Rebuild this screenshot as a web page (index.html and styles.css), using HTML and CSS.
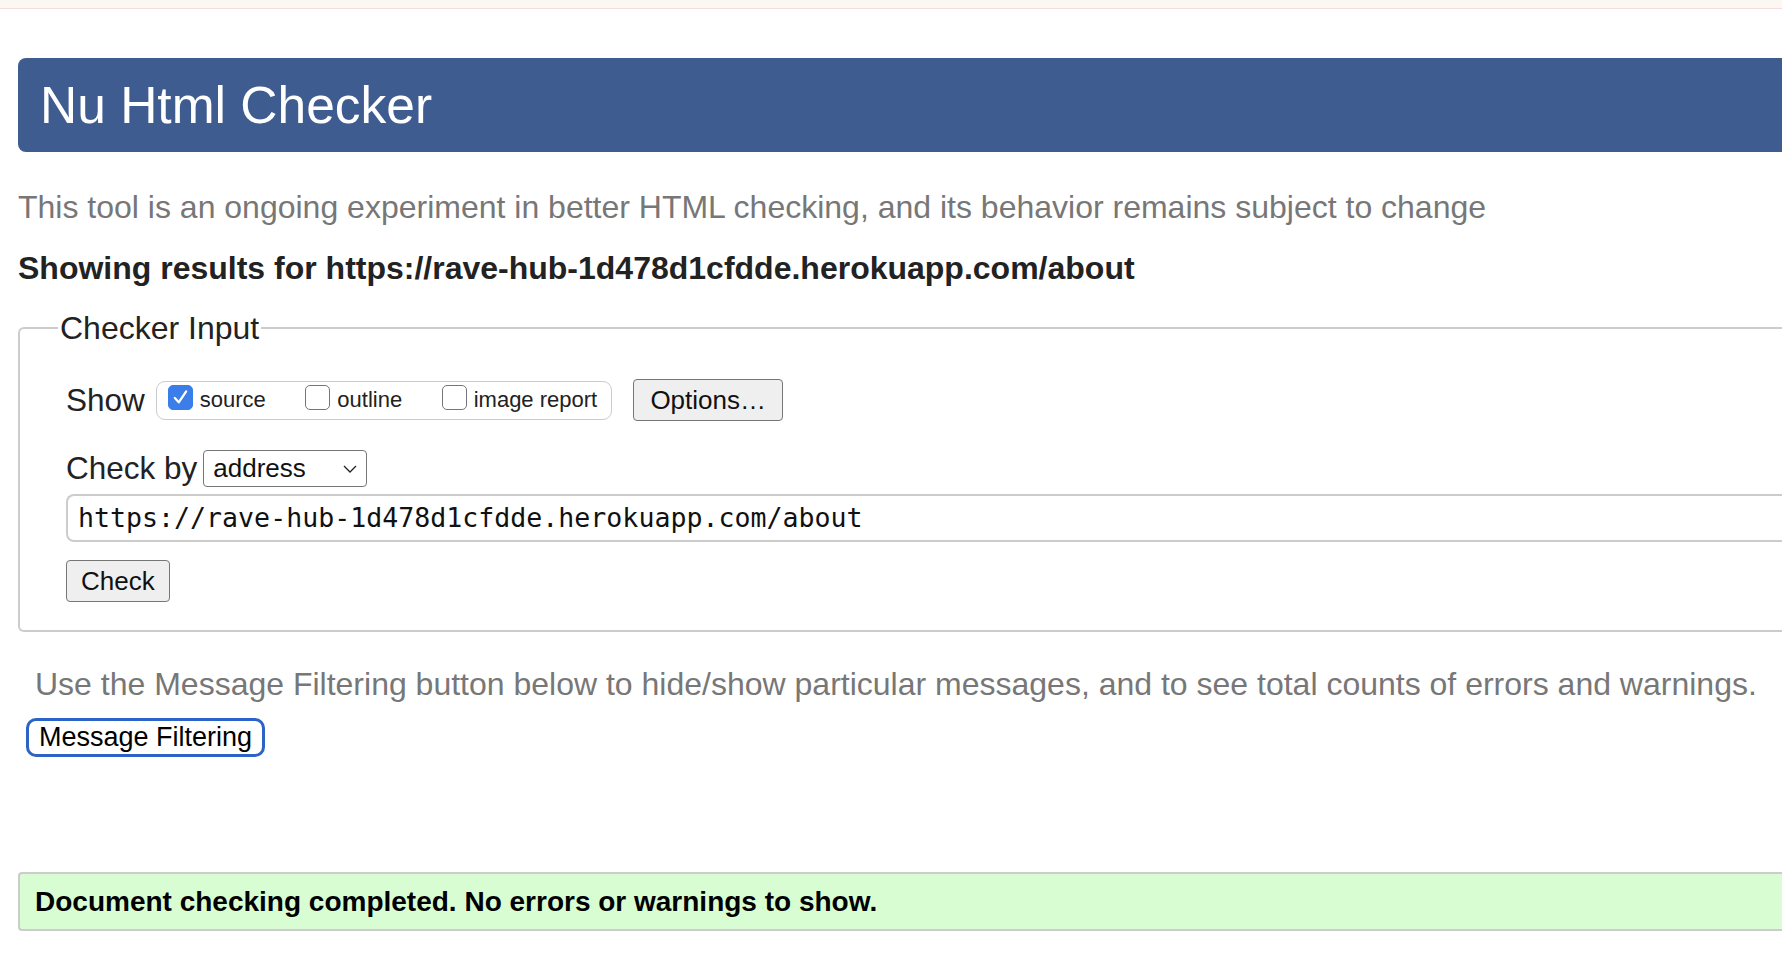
FILE: index.html
```html
<!DOCTYPE html>
<html lang="en">
<head>
<meta charset="utf-8">
<title>Nu Html Checker</title>
<link rel="stylesheet" href="styles.css">
</head>
<body>
<div class="topbar"></div>
<div class="page">
  <h1 class="title">Nu Html Checker</h1>
  <p class="lede">This tool is an ongoing experiment in better HTML checking, and its behavior remains subject to change</p>
  <h2 class="results">Showing results for https://rave-hub-1d478d1cfdde.herokuapp.com/about</h2>
  <fieldset class="checker">
    <legend class="legend">Checker Input</legend>
    <div class="row show-row">
      <span class="label">Show</span>
      <div class="show-group">
        <label class="opt"><span class="box checked"><svg viewBox="0 0 24 24" width="24" height="24"><path d="M5.5 12.5 L10 17.5 L18.5 5" fill="none" stroke="#fff" stroke-width="2.6" stroke-linecap="round" stroke-linejoin="round"/></svg></span><span class="opt-text">source</span></label>
        <label class="opt"><span class="box"></span><span class="opt-text">outline</span></label>
        <label class="opt"><span class="box"></span><span class="opt-text">image report</span></label>
      </div>
      <button class="btn options">Options…</button>
    </div>
    <div class="row checkby-row">
      <span class="label">Check by</span>
      <div class="select"><span>address</span><svg viewBox="0 0 14 8" width="14" height="8"><path d="M1 1 L7 7 L13 1" fill="none" stroke="#222" stroke-width="1.3"/></svg></div>
    </div>
    <div class="url">https://rave-hub-1d478d1cfdde.herokuapp.com/about</div>
    <button class="btn check">Check</button>
  </fieldset>
  <p class="filter-note">Use the Message Filtering button below to hide/show particular messages, and to see total counts of errors and warnings.</p>
  <button class="filter-btn">Message Filtering</button>
  <div class="success">Document checking completed. No errors or warnings to show.</div>
</div>
</body>
</html>
```

FILE: styles.css
```css
html, body {
  margin: 0;
  padding: 0;
  overflow: hidden;
  background: #fff;
}
body {
  font-family: "Liberation Sans", Arial, Helvetica, sans-serif;
  color: #222;
}
.topbar {
  height: 8px;
  background: #fdf7f4;
  border-bottom: 1px solid #f2dfdd;
}
.page {
  width: calc(100% + 60px);
  padding-left: 18px;
  box-sizing: border-box;
}
.title {
  margin: 49px 0 0;
  height: 94px;
  box-sizing: border-box;
  background: #3e5c8f;
  color: #fff;
  border-radius: 8px 0 0 8px;
  font-weight: normal;
  font-size: 51.5px;
  line-height: 94px;
  padding-left: 22px;
}
.lede {
  margin: 35px 0 0 0;
  font-size: 32px;
  line-height: 40px;
  color: #777;
}
.results {
  margin: 22px 0 0 0;
  font-size: 32px;
  line-height: 38px;
  font-weight: bold;
  color: #222;
}
.checker {
  margin: 23px 0 0;
  padding: 0 0 28px 46px;
  border: 2px solid #ccc;
  border-right: none;
  border-radius: 6px 0 0 6px;
}
.legend {
  margin-left: -8px;
  padding: 0 2px;
  font-size: 32px;
  line-height: 36px;
  color: #222;
}
.row {
  display: flex;
  align-items: center;
}
.show-row {
  margin-top: 30px;
  height: 48px;
}
.label {
  font-size: 31.5px;
  color: #222;
}
.show-group {
  display: flex;
  align-items: center;
  margin-left: 11px;
  height: 37px;
  padding: 0 14px 0 11px;
  border: 1.5px solid #ccc;
  border-radius: 9px;
  gap: 14px;
}
.opt {
  display: flex;
  align-items: center;
  font-size: 22px;
  color: #222;
  padding-right: 25.5px;
}
.opt:last-child {
  padding-right: 0;
}
.box {
  width: 25px;
  height: 25px;
  box-sizing: border-box;
  border: 1.5px solid #767676;
  border-radius: 5px;
  background: #fff;
  margin-right: 7px;
  margin-bottom: 6px;
  display: flex;
  align-items: center;
  justify-content: center;
}
.box.checked {
  background: #3b7de9;
  border-color: #3b7de9;
}
.box svg {
  width: 21px;
  height: 21px;
}
.opt-text {
  line-height: 26px;
}
.btn {
  font-family: "Liberation Sans", Arial, Helvetica, sans-serif;
  background: #efefef;
  color: #111;
  border: 1.5px solid #767676;
  border-radius: 4px;
  padding: 0 14px;
}
.options {
  margin-left: 21px;
  width: 150px;
  height: 42px;
  font-size: 26px;
}
.checkby-row {
  margin-top: 26px;
}
.label, .select {
  line-height: 37px;
}
.select {
  margin-left: 6px;
  width: 164px;
  height: 37px;
  box-sizing: border-box;
  border: 1.5px solid #767676;
  border-radius: 4px;
  display: flex;
  align-items: center;
  justify-content: space-between;
  padding: 0 9px 0 9px;
  font-size: 26px;
  color: #111;
}
.url {
  margin-top: 7px;
  height: 48px;
  box-sizing: border-box;
  border: 2px solid #ccc;
  border-right: none;
  border-radius: 8px 0 0 8px;
  padding-left: 10px;
  font-family: "DejaVu Sans Mono", "Liberation Mono", monospace;
  font-size: 26.6px;
  line-height: 44px;
  color: #111;
}
.check {
  display: block;
  margin-top: 18px;
  height: 42px;
  font-size: 26px;
}
.filter-note {
  margin: 32px 0 0 17px;
  font-size: 32px;
  line-height: 40px;
  color: #777;
}
.filter-btn {
  display: block;
  margin: 14px 0 0 8px;
  height: 39px;
  padding: 0 10px;
  background: #fff;
  border: 3px solid #2c63c6;
  border-radius: 10px;
  font-family: "Liberation Sans", Arial, Helvetica, sans-serif;
  font-size: 27px;
  color: #000;
}
.success {
  margin-top: 115px;
  height: 59px;
  box-sizing: border-box;
  background: #d8fdd3;
  border: 2px solid #ccc;
  border-right: none;
  border-radius: 4px 0 0 4px;
  padding-left: 15px;
  font-size: 28px;
  font-weight: bold;
  line-height: 55px;
  color: #000;
}
```
